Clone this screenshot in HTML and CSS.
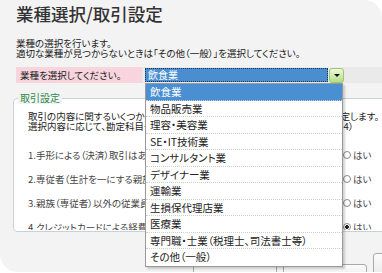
FILE: index.html
```html
<!DOCTYPE html>
<html lang="ja">
<head>
  <meta charset="UTF-8">
  <title>業種選択/取引設定</title>
  <link rel="stylesheet" href="styles.css">
</head>
<body>
  <div class="panel">
    <h1 class="title">業種選択/取引設定</h1>
    <p class="intro">業種の選択を行います。<br>適切な業種が見つからないときは「その他（一般）」を選択してください。</p>

    <div class="row">
      <div class="row-label">業種を選択してください。</div>
      <div class="row-value">
        <div class="select">飲食業</div>
        <div class="select-btn"><span class="arrow"></span></div>
      </div>
    </div>

    <fieldset class="group">
      <legend>取引設定</legend>
      <div class="group-body">
        <p class="lead">取引の内容に関するいくつかの質問にお答えいただくと、適切な勘定科目を設定します。<br>選択内容に応じて、勘定科目や消費税区分の初期設定が変わります。（質問1～4）</p>
        <div class="q">
          <span class="q-text">1.手形による（決済）取引はありますか？</span>
          <span class="ans"><span class="radio"></span>はい<span class="radio"></span>いいえ</span>
        </div>
        <div class="q">
          <span class="q-text">2.専従者（生計を一にする親族）に給与を支払っていますか？</span>
          <span class="ans"><span class="radio"></span>はい<span class="radio"></span>いいえ</span>
        </div>
        <div class="q">
          <span class="q-text">3.親族（専従者）以外の従業員に給与を支払っていますか？</span>
          <span class="ans"><span class="radio"></span>はい<span class="radio"></span>いいえ</span>
        </div>
        <div class="q">
          <span class="q-text">4.クレジットカードによる経費の支払いはありますか？</span>
          <span class="ans"><span class="radio checked"></span>はい<span class="radio"></span>いいえ</span>
        </div>
      </div>
    </fieldset>

    <div class="footer">
      <button class="btn">戻る</button>
      <button class="btn">次へ</button>
      <button class="btn btn-tall">キャンセル</button>
    </div>

    <ul class="menu">
      <li class="active">飲食業</li>
      <li>物品販売業</li>
      <li>理容・美容業</li>
      <li>SE・IT技術業</li>
      <li>コンサルタント業</li>
      <li>デザイナー業</li>
      <li>運輸業</li>
      <li>生損保代理店業</li>
      <li>医療業</li>
      <li>専門職・士業（税理士、司法書士等）</li>
      <li>その他（一般）</li>
    </ul>
  </div>
</body>
</html>
```

FILE: styles.css
```css
body {
  margin: 0;
  background-color: #ffffff;
  font-family: "Noto Sans CJK JP", "DejaVu Sans", sans-serif;
  font-feature-settings: "palt";
  color: #222;
}
.panel {
  position: relative;
  width: 382px;
  height: 272px;
  box-sizing: border-box;
  padding-left: 13px;
  background-color: #f3f3f3;
  border-radius: 0 18px 0 18px;
  overflow: hidden;
}
.title {
  margin: 4px 0 0 3px;
  font-size: 17.5px;
  font-weight: 500;
  line-height: 20px;
  color: #333;
}
.intro {
  margin: 14px 0 0 3px;
  font-size: 9.5px;
  line-height: 10px;
  white-space: nowrap;
}
.row {
  display: flex;
  height: 16px;
  margin: 9px 0 0 3px;
}
.row-label {
  width: 126px;
  padding-left: 4px;
  box-sizing: border-box;
  background-color: #f8d5de;
  font-size: 9.5px;
  line-height: 16px;
}
.row-value {
  flex: 1;
  display: flex;
  align-items: center;
  gap: 1px;
  padding-left: 3px;
  background-color: #eaeaea;
}
.select {
  width: 183px;
  height: 14px;
  box-sizing: border-box;
  padding-left: 2px;
  background-color: #4a8ed0;
  border: 1px dotted #1c3558;
  color: #fff;
  font-size: 10px;
  line-height: 12px;
}
.select-btn {
  display: flex;
  align-items: center;
  justify-content: center;
  width: 15px;
  height: 15px;
  box-sizing: border-box;
  border: 1px solid #9cc86e;
  border-radius: 3px;
  background: linear-gradient(#eef8dc, #b4dd88);
}
.arrow {
  width: 0;
  height: 0;
  border-left: 3px solid transparent;
  border-right: 3px solid transparent;
  border-top: 3px solid #111;
}
.group {
  width: 400px;
  height: 140px;
  box-sizing: border-box;
  margin: 9px 0 0 0;
  padding: 0 14px;
  border: 1px solid #c8d1da;
  border-radius: 4px;
  background-color: #fff;
}
.group legend {
  margin-left: -10px;
  padding: 0 2px;
  font-size: 10px;
  line-height: 12px;
  color: #2f8a4c;
  background-color: #f3f3f3;
}
.group-body {
  height: 126px;
  overflow: hidden;
}
.lead {
  margin: 8px 0 0 0;
  font-size: 9.5px;
  line-height: 9.5px;
  white-space: nowrap;
}
.q {
  display: flex;
  align-items: center;
  height: 24px;
  font-size: 9.5px;
  line-height: 12px;
  color: #444;
}
.q:first-of-type {
  margin-top: 12px;
}
.q-text {
  flex: 1;
  min-width: 0;
  white-space: nowrap;
  overflow: hidden;
}
.ans {
  flex: none;
  display: flex;
  align-items: center;
  width: 55px;
  white-space: nowrap;
}
.radio {
  flex: none;
  width: 6px;
  height: 6px;
  margin-right: 2px;
  border: 1px solid #8a8a8a;
  border-radius: 50%;
  background-color: #fff;
}
.ans .radio:nth-of-type(2) {
  margin-left: 24px;
}
.radio.checked {
  background: radial-gradient(#222 40%, #fff 50%);
}
.footer {
  display: flex;
  align-items: flex-start;
  gap: 6px;
  margin-top: 21px;
  padding-left: 180px;
}
.btn {
  flex: none;
  width: 84px;
  height: 28px;
  margin-top: 11px;
  border: 1px solid #a9a9a9;
  border-radius: 3px;
  background: linear-gradient(#fbfbfb, #dcdcdc);
  font-family: inherit;
  font-size: 10px;
  line-height: 26px;
  color: #222;
}
.btn-tall {
  height: 40px;
  margin-top: 0;
}
.menu {
  position: absolute;
  left: 145px;
  top: 83px;
  width: 198px;
  margin: 0;
  padding: 0;
  list-style: none;
  background-color: #fff;
  border: 1px solid #999;
  box-shadow: 2px 2px 2px rgba(0, 0, 0, 0.18);
  box-sizing: border-box;
}
.menu li {
  height: 16.5px;
  box-sizing: border-box;
  padding-left: 4px;
  border-bottom: 1px dotted #cfcfcf;
  font-size: 10.5px;
  line-height: 15.5px;
  white-space: nowrap;
}
.menu li:last-child {
  border-bottom: none;
}
.menu li.active {
  background-color: #4a8fd1;
  color: #fff;
}
```
